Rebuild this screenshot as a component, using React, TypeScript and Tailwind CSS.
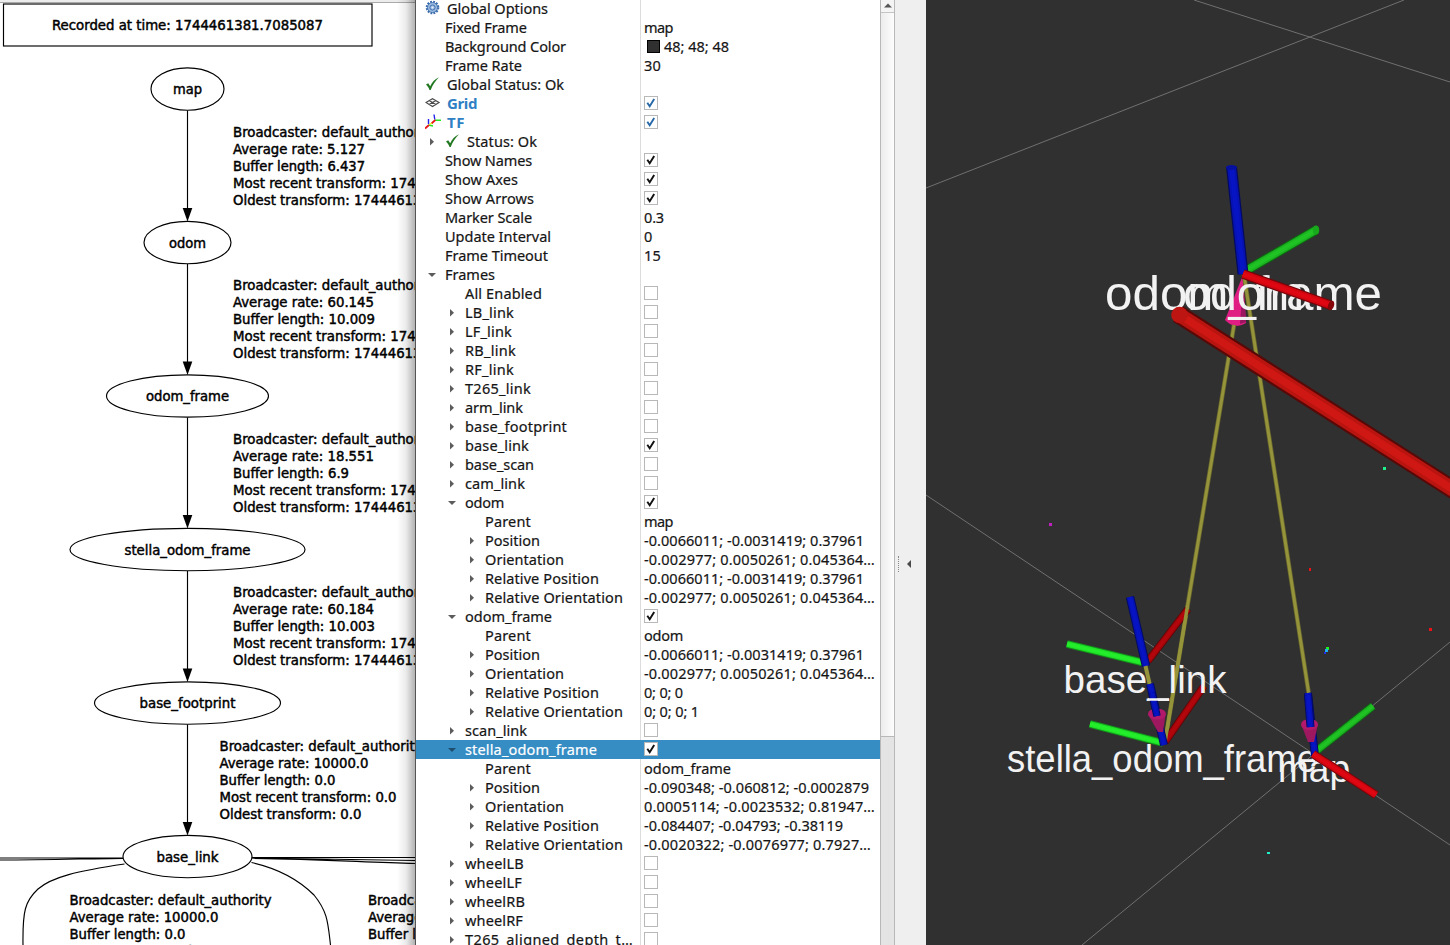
import React from "react";

type Row = {
  name: string;
  pad: number;
  w: number;
  arrow?: "right" | "down";
  icon?: "gear" | "check" | "grid" | "tf";
  value?: string;
  vw?: number;
  box?: "on" | "off" | "blue";
  bold?: boolean;
  selected?: boolean;
  swatch?: boolean;
};

const rows: Row[] = [
  { name: "Global Options", pad: 31, w: 101, icon: "gear" },
  { name: "Fixed Frame", pad: 29, w: 82, value: "map", vw: 29 },
  { name: "Background Color", pad: 29, w: 121, value: "48; 48; 48", vw: 65, swatch: true },
  { name: "Frame Rate", pad: 29, w: 77, value: "30", vw: 17 },
  { name: "Global Status: Ok", pad: 31, w: 117, icon: "check" },
  { name: "Grid", pad: 31, w: 30, icon: "grid", box: "blue", bold: true },
  { name: "TF", pad: 31, w: 18, icon: "tf", box: "blue", bold: true },
  { name: "Status: Ok", pad: 51, w: 70, icon: "check", arrow: "right" },
  { name: "Show Names", pad: 29, w: 87, box: "on" },
  { name: "Show Axes", pad: 29, w: 73, box: "on" },
  { name: "Show Arrows", pad: 29, w: 89, box: "on" },
  { name: "Marker Scale", pad: 29, w: 87, value: "0.3", vw: 20 },
  { name: "Update Interval", pad: 29, w: 106, value: "0", vw: 9 },
  { name: "Frame Timeout", pad: 29, w: 103, value: "15", vw: 17 },
  { name: "Frames", pad: 29, w: 50, arrow: "down" },
  { name: "All Enabled", pad: 49, w: 77, box: "off" },
  { name: "LB_link", pad: 49, w: 49, arrow: "right", box: "off" },
  { name: "LF_link", pad: 49, w: 47, arrow: "right", box: "off" },
  { name: "RB_link", pad: 49, w: 51, arrow: "right", box: "off" },
  { name: "RF_link", pad: 49, w: 49, arrow: "right", box: "off" },
  { name: "T265_link", pad: 49, w: 66, arrow: "right", box: "off" },
  { name: "arm_link", pad: 49, w: 58, arrow: "right", box: "off" },
  { name: "base_footprint", pad: 49, w: 102, arrow: "right", box: "off" },
  { name: "base_link", pad: 49, w: 64, arrow: "right", box: "on" },
  { name: "base_scan", pad: 49, w: 69, arrow: "right", box: "off" },
  { name: "cam_link", pad: 49, w: 60, arrow: "right", box: "off" },
  { name: "odom", pad: 49, w: 39, arrow: "down", box: "on" },
  { name: "Parent", pad: 69, w: 46, value: "map", vw: 29 },
  { name: "Position", pad: 69, w: 55, arrow: "right", value: "-0.0066011; -0.0031419; 0.37961", vw: 220 },
  { name: "Orientation", pad: 69, w: 79, arrow: "right", value: "-0.002977; 0.0050261; 0.045364…", vw: 231 },
  { name: "Relative Position", pad: 69, w: 114, arrow: "right", value: "-0.0066011; -0.0031419; 0.37961", vw: 220 },
  { name: "Relative Orientation", pad: 69, w: 138, arrow: "right", value: "-0.002977; 0.0050261; 0.045364…", vw: 231 },
  { name: "odom_frame", pad: 49, w: 87, arrow: "down", box: "on" },
  { name: "Parent", pad: 69, w: 46, value: "odom", vw: 39 },
  { name: "Position", pad: 69, w: 55, arrow: "right", value: "-0.0066011; -0.0031419; 0.37961", vw: 220 },
  { name: "Orientation", pad: 69, w: 79, arrow: "right", value: "-0.002977; 0.0050261; 0.045364…", vw: 231 },
  { name: "Relative Position", pad: 69, w: 114, arrow: "right", value: "0; 0; 0", vw: 39 },
  { name: "Relative Orientation", pad: 69, w: 138, arrow: "right", value: "0; 0; 0; 1", vw: 55 },
  { name: "scan_link", pad: 49, w: 62, arrow: "right", box: "off" },
  { name: "stella_odom_frame", pad: 49, w: 132, arrow: "down", box: "on", selected: true },
  { name: "Parent", pad: 69, w: 46, value: "odom_frame", vw: 87 },
  { name: "Position", pad: 69, w: 55, arrow: "right", value: "-0.090348; -0.060812; -0.0002879", vw: 225 },
  { name: "Orientation", pad: 69, w: 79, arrow: "right", value: "0.0005114; -0.0023532; 0.81947…", vw: 231 },
  { name: "Relative Position", pad: 69, w: 114, arrow: "right", value: "-0.084407; -0.04793; -0.38119", vw: 199 },
  { name: "Relative Orientation", pad: 69, w: 138, arrow: "right", value: "-0.0020322; -0.0076977; 0.7927…", vw: 227 },
  { name: "wheelLB", pad: 49, w: 59, arrow: "right", box: "off" },
  { name: "wheelLF", pad: 49, w: 57, arrow: "right", box: "off" },
  { name: "wheelRB", pad: 49, w: 60, arrow: "right", box: "off" },
  { name: "wheelRF", pad: 49, w: 58, arrow: "right", box: "off" },
  { name: "T265_aligned_depth_t…", pad: 49, w: 168, arrow: "right", box: "off" },
];

/** Label that spreads its letters so that it fills the given advance width. */
function Fit({ text, width, bold }: { text: string; width: number; bold?: boolean }) {
  const ref = React.useRef<HTMLSpanElement>(null);
  const [gap, setGap] = React.useState(0);
  React.useLayoutEffect(() => {
    if (ref.current) {
      const natural = ref.current.getBoundingClientRect().width;
      setGap((width - natural) / text.length);
    }
  }, []);
  return (
    <span
      ref={ref}
      className={bold ? "text-[15px] font-bold text-[#2f7fc4]" : "[-webkit-text-stroke:0.2px_currentColor]"}
      style={{ letterSpacing: gap }}
    >
      {text}
    </span>
  );
}

function RowIcon({ kind }: { kind: NonNullable<Row["icon"]> }) {
  if (kind === "gear")
    return (
      <svg width="16" height="16" viewBox="0 0 16 16" fill="none">
        <circle cx="7.5" cy="7.5" r="5.7" stroke="#3c6cab" strokeWidth="2.2" strokeDasharray="1.8 1.18" />
        <circle cx="7.5" cy="7.5" r="5" fill="#9dbce2" stroke="#4473b0" />
        <circle cx="7.5" cy="7.5" r="2.6" stroke="#4473b0" />
        <circle cx="7.5" cy="7.5" r="1" fill="#e8f0fa" />
      </svg>
    );
  if (kind === "check")
    return (
      <svg width="16" height="16" viewBox="0 0 16 16">
        <path d="M1 8.6 3.2 7.3 5.2 10.3C7 6.3 9.5 3.3 14 1.3 10.500 4.800 7.700 9 5.700 13.900H4.500C3.700 11.700 2.600 10.100 1 8.600Z" fill="#217821" />
      </svg>
    );
  if (kind === "grid")
    return (
      <svg width="16" height="16" viewBox="0 0 16 16" fill="none" stroke="#4a4a4a" strokeWidth="1.200">
        <path d="M1 7.500 7.500 3.800 14 7.500 7.500 11.600ZM4.200 5.600 10.800 9.600M10.800 5.600 4.200 9.600" />
      </svg>
    );
  return (
    <svg width="17" height="16" viewBox="0 0 17 16" fill="none" strokeWidth="1.400">
      <path d="M3.500 5v5M9 .5 9.800 5.500" stroke="#2222ee" />
      <path d="M3.500 11 8 12M10 6.200h6" stroke="#22e822" />
      <path d="M0 14.500 4 11M6.500 9.500 10.300 6" stroke="#e81818" strokeWidth="1.800" />
      <path d="M4.500 10.500 7 9" stroke="#e8e020" />
    </svg>
  );
}

function CheckBox({ state }: { state: NonNullable<Row["box"]> }) {
  return (
    <span className="mb-[2px] flex size-[14px] items-center justify-center border border-[#b8b8b8] bg-white">
      {state !== "off" && (
        <svg width="12" height="12" viewBox="0 0 12 12" fill="none" stroke={state === "blue" ? "#2668a8" : "#101010"} strokeWidth="1.9">
          <path d="M2.300 5.700 4.700 9.200 9.200 2" />
        </svg>
      )}
    </span>
  );
}

function TreeRow({ row }: { row: Row }) {
  const lead = row.pad - (row.icon ? 22 : 0);
  return (
    <div className={`flex h-[19px] shrink-0 items-center ${row.selected ? "bg-[#368dc4] text-white" : "text-[#151515]"}`}>
      <div className={`flex h-full w-[225px] shrink-0 items-center border-r ${row.selected ? "border-[#368dc4]" : "border-[#dcdcdc]"}`}>
        <span className="flex h-full shrink-0 items-center justify-end" style={{ width: lead }}>
          {row.arrow && (
            <svg width="8" height="8" viewBox="0 0 8 8" className="mr-[9px]" fill={row.selected ? "#1d4e70" : "#5c5c5c"}>
              {row.arrow === "right" ? <path d="M2 0 6 3.800 2 7.600Z" /> : <path d="M0 2H8L4 6Z" />}
            </svg>
          )}
        </span>
        {row.icon && (
          <span className="mb-[2px] w-[22px] shrink-0">
            <RowIcon kind={row.icon} />
          </span>
        )}
        <Fit text={row.name} width={row.w} bold={row.bold} />
      </div>
      <div className="flex h-full items-center pl-[3px]">
        {row.box && <CheckBox state={row.box} />}
        {row.swatch && <span className="mr-1 ml-[3px] size-[13px] border border-black bg-[#303030]" />}
        {row.value && <Fit text={row.value} width={row.vw ?? 0} />}
      </div>
    </div>
  );
}

const nodes = [
  { name: "map", y: 89, rx: 36.5, w: 29 },
  { name: "odom", y: 242.5, rx: 43.5, w: 37 },
  { name: "odom_frame", y: 396, rx: 81, w: 83 },
  { name: "stella_odom_frame", y: 549.5, rx: 117.5, w: 126 },
  { name: "base_footprint", y: 703, rx: 93, w: 96 },
  { name: "base_link", y: 856.5, rx: 64.5, w: 62 },
];

const edges: { x: number; y: number; lines: [string, number][] }[] = [
  { x: 233, y: 137, lines: [["Broadcaster: default_authority", 203], ["Average rate: 5.127", 132], ["Buffer length: 6.437", 132], ["Most recent transform: 1744461381.692", 272], ["Oldest transform: 1744461375.255", 235]] },
  { x: 233, y: 290.5, lines: [["Broadcaster: default_authority", 203], ["Average rate: 60.145", 141], ["Buffer length: 10.009", 142], ["Most recent transform: 1744461381.692", 272], ["Oldest transform: 1744461371.683", 235]] },
  { x: 233, y: 444, lines: [["Broadcaster: default_authority", 203], ["Average rate: 18.551", 141], ["Buffer length: 6.9", 116], ["Most recent transform: 1744461381.692", 272], ["Oldest transform: 1744461374.792", 235]] },
  { x: 233, y: 597.5, lines: [["Broadcaster: default_authority", 203], ["Average rate: 60.184", 141], ["Buffer length: 10.003", 142], ["Most recent transform: 1744461381.692", 272], ["Oldest transform: 1744461371.689", 235]] },
  { x: 219.5, y: 751.5, lines: [["Broadcaster: default_authority", 203], ["Average rate: 10000.0", 149], ["Buffer length: 0.0", 116], ["Most recent transform: 0.0", 177], ["Oldest transform: 0.0", 142]] },
  { x: 69.5, y: 905, lines: [["Broadcaster: default_authority", 202], ["Average rate: 10000.0", 149], ["Buffer length: 0.0", 116], ["Most recent transform: 0.0", 177]] },
  { x: 368, y: 905, lines: [["Broadcaster: default_authority", 202], ["Average rate: 10000.0", 149], ["Buffer length: 0.0", 116]] },
];

function FrameGraph() {
  return (
    <svg className="block font-['DejaVu_Sans_Condensed','DejaVu_Sans',sans-serif] text-[14.5px]" width="415" height="945" viewBox="0 0 415 945">
      <rect width="415" height="2.5" fill="#ececec" />
      <path d="M0 2.5H415" stroke="#aaa" />
      <g fill="none" stroke="#000" strokeWidth="1.15">
        <rect x="3.5" y="4" width="368.5" height="42" />
        {nodes.map((n) => (
          <ellipse key={n.name} cx="187.5" cy={n.y} rx={n.rx} ry="21.2" />
        ))}
        {nodes.slice(1).map((n) => (
          <path key={n.name} d={`M187.5 ${n.y - 132}V${n.y - 32}`} />
        ))}
        <path d="M0 858H123M0 860C50 860 90 858.5 123 858.3M252 857.5H415M252 858C300 858.5 350 859.5 415 860.5M252 858.3C320 859 360 862 415 863.5" />
        <path d="M124.500 864C77 871 52 877 38 889C25 901 22.500 911 23 945M251.500 862.500C276 868 298 879 314 895C328 912 328 924 330.500 945" />
      </g>
      {nodes.slice(1).map((n) => (
        <path key={n.name} d={`M182.700 ${n.y - 34.5}h9.600l-4.800 13.500z`} />
      ))}
      <g stroke="#000" strokeWidth=".45">
        <text x="52" y="30" textLength="271" lengthAdjust="spacingAndGlyphs">Recorded at time: 1744461381.7085087</text>
        {nodes.map((n) => (
          <text key={n.name} x={187.5 - n.w / 2} y={n.y + 5} textLength={n.w} lengthAdjust="spacingAndGlyphs">
            {n.name}
          </text>
        ))}
        {edges.map((e) =>
          e.lines.map(([line, w], i) => (
            <text key={`${e.x}-${e.y}-${i}`} x={e.x} y={Math.floor(e.y) + i * 17} textLength={w} lengthAdjust="spacingAndGlyphs">
              {line}
            </text>
          )),
        )}
      </g>
    </svg>
  );
}

function Rod({ a, b, w, tone }: { a: [number, number]; b: [number, number]; w: number; tone: [string, string, string] }) {
  const d = `M${a[0]} ${a[1]}L${b[0]} ${b[1]}`;
  return (
    <g fill="none">
      <path d={d} stroke={tone[2]} strokeWidth={w} />
      <path d={d} stroke={tone[1]} strokeWidth={w * 0.78} />
      <path d={d} stroke={tone[0]} strokeWidth={w * 0.42} />
    </g>
  );
}

const red: [string, string, string] = ["#df0812", "#cf0610", "#750308"];
const darkRed: [string, string, string] = ["#b3060c", "#a3060a", "#620306"];
const green: [string, string, string] = ["#1fc424", "#1cb321", "#0c6a10"];
const brightGreen: [string, string, string] = ["#24ee2c", "#20e328", "#12901a"];
const blue: [string, string, string] = ["#0714c4", "#0612b2", "#030a60"];
const big: [string, string, string] = ["#cf1713", "#b81410", "#560907"];

function Scene() {
  return (
    <svg className="block bg-[#303030] font-['Liberation_Sans',sans-serif]" width="524" height="945" viewBox="926 0 524 945">
      <g stroke="#777" strokeWidth=".9" fill="none">
        <path d="M926 188 1404 0M1194 0 1450 82M926 495 1450 845M1082 945 1450 642" />
      </g>
      <Rod a={[1247, 270]} b={[1316, 230]} w={9.5} tone={green} />
      <ellipse cx="1316" cy="230" rx="3.2" ry="4.6" fill="#18a81c" />
      <path d="M1243 275 1225 320Q1235 330 1246 323Z" fill="#e01d82" />
      <path d="M1243 285 1246 322 1240 324Z" fill="#9a165e" />
      <g fill="none">
        <path d="M1234 325 1165 742M1244 275 1309 695" stroke="#66652d" strokeWidth="4.5" />
        <path d="M1234 325 1165 742M1244 275 1309 695" stroke="#96943b" strokeWidth="3" />
      </g>
      <g fill="#f2f2f2" fontSize="48">
        <text x="1105" y="310" textLength="277" lengthAdjust="spacingAndGlyphs">odom_frame</text>
        <text x="1183" y="310" textLength="121" lengthAdjust="spacingAndGlyphs">odom</text>
      </g>
      <Rod a={[1231.5, 167]} b={[1243, 274]} w={11} tone={blue} />
      <ellipse cx="1231.5" cy="167.5" rx="5.5" ry="2.5" fill="#0610a0" />
      <Rod a={[1243, 274]} b={[1330, 305]} w={9.5} tone={red} />
      <ellipse cx="1331" cy="305.5" rx="3" ry="5" fill="#850508" transform="rotate(20 1331 305.5)" />
      <Rod a={[1178, 314]} b={[1460, 494]} w={18.5} tone={big} />
      <circle cx="1179.5" cy="315" r="8.3" fill="#bd1511" />

      <Rod a={[1067, 644]} b={[1145, 663]} w={7.5} tone={brightGreen} />
      <Rod a={[1148, 661]} b={[1188, 609]} w={7.5} tone={darkRed} />
      <Rod a={[1090, 724]} b={[1163, 743]} w={7.5} tone={brightGreen} />
      <Rod a={[1165, 742]} b={[1204, 686]} w={7.5} tone={darkRed} />
      <path d="M1187.500 606 1165 742" stroke="#96943b" strokeWidth="3.5" />
      <g fill="#f2f2f2" fontSize="39">
        <text x="1063.5" y="693" textLength="163" lengthAdjust="spacingAndGlyphs">base_link</text>
        <text x="1007" y="772" textLength="310" lengthAdjust="spacingAndGlyphs">stella_odom_frame</text>
        <text x="1278" y="782" textLength="72" lengthAdjust="spacingAndGlyphs">map</text>
      </g>
      <Rod a={[1130, 597]} b={[1146, 666]} w={8.5} tone={blue} />
      <path d="M1145.500 666 1151 690" stroke="#96943b" strokeWidth="4" />
      <Rod a={[1150, 684]} b={[1164, 745]} w={8} tone={blue} />
      <path d="M1148.500 715 1158 732H1163L1165.500 715Z" fill="#9e185f" />
      <ellipse cx="1157" cy="714" rx="9" ry="5.5" fill="#b3196b" />
      <Rod a={[1152, 693]} b={[1157, 716]} w={7.5} tone={blue} />
      <path d="M1148 699.500H1169" stroke="#f2f2f2" strokeWidth="2.5" />

      <Rod a={[1315, 752]} b={[1373, 706]} w={8} tone={green} />
      <Rod a={[1308, 693]} b={[1315, 756]} w={8} tone={blue} />
      <path d="M1301.500 725 1308 742H1314L1318 724Z" fill="#9e185f" />
      <ellipse cx="1309.5" cy="724.5" rx="8.5" ry="5.5" fill="#b3196b" />
      <Rod a={[1308, 695]} b={[1310.5, 727]} w={8} tone={blue} />
      <Rod a={[1313, 754]} b={[1376, 795]} w={8.5} tone={red} />

      <path fill="#1ef08a" d="M1383 467h3v3h-3z" />
      <path fill="#c020c0" d="M1049 523h3v3h-3z" />
      <path fill="#f01018" d="M1309 568h2v3h-2zM1429 628h3v3h-3z" />
      <path fill="#20f020" d="M1326 647h3v3h-3z" />
      <path fill="#20b0f0" d="M1325 649h3v3h-3z" />
      <path fill="#2030f0" d="M1324 652h2v2h-2z" />
      <path fill="#20f0c8" d="M1267 852h3v2h-3z" />
    </svg>
  );
}

export default function App() {
  return (
    <div className="flex h-[945px] w-[1450px] overflow-hidden bg-white">
      <section className="relative w-[415px] shrink-0 overflow-hidden bg-white">
        <FrameGraph />
        <div className="absolute inset-y-0 right-0 w-[18px] bg-linear-to-r from-transparent via-black/8 to-black/30" />
      </section>
      <main className="flex w-[480px] shrink-0 border-l border-[#555] bg-white">
        <div className="-mt-px flex w-[464px] shrink-0 flex-col font-['Noto_Sans',sans-serif] text-[14.5px] leading-[19px] whitespace-pre">
          {rows.map((row, i) => (
            <TreeRow key={i} row={row} />
          ))}
        </div>
        <div className="flex w-[15px] shrink-0 flex-col border-x border-[#b8b8b8]">
          <div className="flex h-[13px] items-center justify-center border-b border-[#c4c4c4] bg-[#f4f4f4] pb-[2px]">
            <svg width="8" height="5" viewBox="0 0 8 5" fill="#555">
              <path d="M0 4.500 4 .5 8 4.500Z" />
            </svg>
          </div>
          <div className="h-[723px] bg-linear-to-r from-[#ececec] to-[#fdfdfd]" />
          <div className="flex-1 border-t border-[#b8b8b8] bg-[#e4e4e4]" />
        </div>
      </main>
      <div className="flex w-[31px] shrink-0 items-center bg-[#efefef] pt-[183px]">
        <div className="ml-[3px] h-[16px] border-l border-dotted border-[#888]" />
        <svg className="ml-[8px]" width="4" height="8" viewBox="0 0 4 8" fill="#4a4a4a">
          <path d="M4 0V8L0 4Z" />
        </svg>
      </div>
      <Scene />
    </div>
  );
}
